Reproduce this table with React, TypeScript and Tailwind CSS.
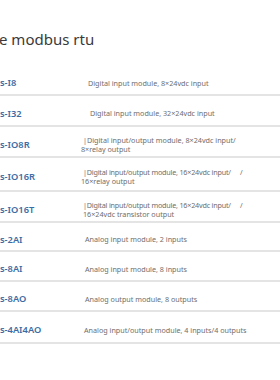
import React from "react";

type Row = {
  code: string;
  lines: string[];
  h: string;
  pl: string;
  slash?: boolean;
};

const rows: Row[] = [
  { code: "s-I8", lines: ["Digital input module, 8×24vdc input"], h: "h-[30px]", pl: "pl-[5px]" },
  { code: "s-I32", lines: ["Digital input module, 32×24vdc input"], h: "h-[31px]", pl: "pl-[7px]" },
  { code: "s-IO8R", lines: ["|Digital input/output module, 8×24vdc input/", "8×relay output"], h: "h-[31px]", pl: "pl-[0px]" },
  { code: "s-IO16R", lines: ["|Digital input/output module, 16×24vdc input/", "16×relay output"], h: "h-[34px]", pl: "pl-[0px]", slash: true },
  { code: "s-IO16T", lines: ["|Digital input/output module, 16×24vdc input/", "16×24vdc transistor output"], h: "h-[31px]", pl: "pl-[0px]", slash: true },
  { code: "s-2AI", lines: ["Analog input module, 2 inputs"], h: "h-[29px]", pl: "pl-[2px]" },
  { code: "s-8AI", lines: ["Analog input module, 8 inputs"], h: "h-[30px]", pl: "pl-[2px]" },
  { code: "s-8AO", lines: ["Analog output module, 8 outputs"], h: "h-[30px]", pl: "pl-[2px]" },
  { code: "s-4AI4AO", lines: ["Analog input/output module, 4 inputs/4 outputs"], h: "h-[32px]", pl: "pl-[1px]" },
];

export default function App() {
  return (
    <div
      className="w-[280px] h-[380px] bg-white overflow-hidden"
      style={{ fontFamily: '"Noto Sans", "Noto Sans CJK SC", sans-serif' }}
    >
      <div className="h-[66px] pt-[31px]">
        <div className="text-[15px] leading-[17px] text-[#3a3a3a] -ml-[1px]">e modbus rtu</div>
      </div>
      {rows.map((r) => (
        <div
          key={r.code}
          className={`${r.h} border-b-2 border-[#e4e4e4] grid grid-cols-[83px_1fr] items-center pt-[6px]`}
        >
          <div className="text-[9.3px] font-semibold text-[#3d6ba3] leading-[12px] whitespace-nowrap">
            {r.code}
          </div>
          <div className={`${r.pl} relative text-[7.2px] leading-[9px] text-[#6e6e6e] whitespace-nowrap`}>
            {r.lines.map((l, i) => (
              <div
                key={i}
                className={
                  i === 0 && r.slash
                    ? "tracking-[-0.2px]"
                    : i === 1 && r.code !== "s-IO16T"
                    ? "-ml-[2px]"
                    : ""
                }
              >
                {l}
              </div>
            ))}
            {r.slash && (
              <span className="absolute left-[157px] top-0 leading-[9px]">/</span>
            )}
          </div>
        </div>
      ))}
    </div>
  );
}
